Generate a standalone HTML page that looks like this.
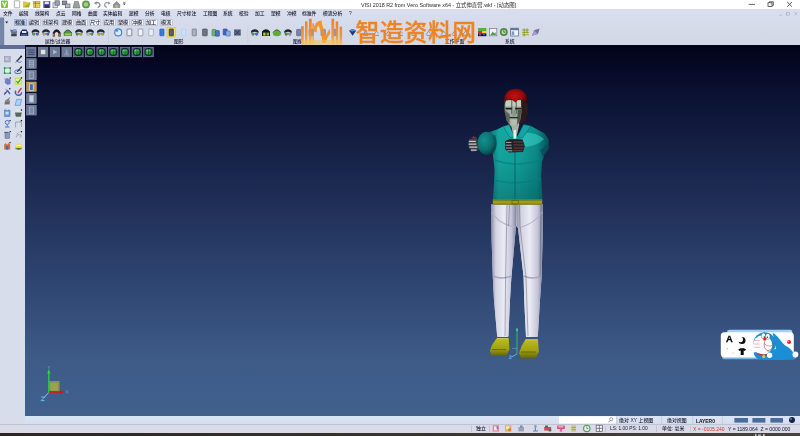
<!DOCTYPE html>
<html lang="zh-CN">
<head>
<meta charset="utf-8">
<title>VISI 2018 R2 from Vero Software x64</title>
<style>
html,body{margin:0;padding:0;}
body{width:800px;height:436px;overflow:hidden;position:relative;background:#d6dceb;
 font-family:"Liberation Sans","Noto Sans CJK SC",sans-serif;color:#1a1a2a;}
.abs{position:absolute;}
.t{position:absolute;white-space:nowrap;line-height:1;will-change:transform;font-size:4.8px;color:#15152a;font-weight:500;}
#titlebar{left:0;top:0;width:800px;height:9px;background:#ffffff;}
#ribbon{left:0;top:9px;width:800px;height:36px;background:linear-gradient(to bottom,#dadff0 0%,#d6dbeb 40%,#d3d8e6 100%);}
#view{left:25px;top:45px;width:775px;height:371px;
 background:linear-gradient(to bottom,#02021a 0%,#0a1030 12%,#1a274e 35%,#2d436f 62%,#3e5b88 85%,#41608c 100%);}
#lefthead{left:0;top:45px;width:25px;height:3.5px;background:#5d6d97;}
#left{left:0;top:48.5px;width:25px;height:375.8px;background:#d8ddec;}
#status1{left:25px;top:416px;width:775px;height:8.5px;background:linear-gradient(to bottom,#d9e5f6 0%,#d7e1f2 50%,#d5dcec 100%);}
#sline{left:0;top:424.3px;width:800px;height:0.8px;background:#bfc3d0;}
#status2{left:0;top:425px;width:800px;height:8px;background:#d9dce8;}
#taskbar{left:0;top:432.6px;width:800px;height:4px;background:linear-gradient(to right,#2e2420 0%,#3a332c 45%,#48433d 100%);}
.tab{position:absolute;top:18.6px;height:7.2px;background:#f5f6fb;border:0.5px solid #c3c9dc;box-sizing:border-box;border-radius:0.6px;}
.tab.sel{background:#bfcfea;border-color:#9ab2dc;}
.lbl{color:#22223a;font-size:4.8px;}
#wm{position:absolute;left:355.6px;top:18px;font-size:23.7px;font-weight:500;-webkit-text-stroke:0.35px #ef7f16;color:#ef7f16;opacity:.94;letter-spacing:.45px;line-height:30px;white-space:nowrap;font-family:"Liberation Sans","Noto Sans CJK SC",sans-serif;}
</style>
</head>
<body>
<div id="titlebar" class="abs"></div>
<div id="ribbon" class="abs"></div>
<div id="lefthead" class="abs"></div>
<div id="left" class="abs"></div>
<div id="view" class="abs"></div>
<div id="status1" class="abs"></div>
<div id="sline" class="abs"></div>
<div id="status2" class="abs"></div>
<div id="taskbar" class="abs"></div>

<div class="t" id="title" style="left:361.2px;top:2.9px;font-size:5.4px;color:#2a2a2a;font-weight:400;">VISI 2018 R2 from Vero Software x64 - 立式伸直臂.wkf - [动态图]</div>
<div class="t m" style="left:3px;top:11.5px;">文件</div>
<div class="t m" style="left:19px;top:11.5px;">编辑</div>
<div class="t m" style="left:35px;top:11.5px;">线架构</div>
<div class="t m" style="left:56px;top:11.5px;">点云</div>
<div class="t m" style="left:71.5px;top:11.5px;">网格</div>
<div class="t m" style="left:88px;top:11.5px;">曲面</div>
<div class="t m" style="left:103px;top:11.5px;">实体编辑</div>
<div class="t m" style="left:129px;top:11.5px;">建模</div>
<div class="t m" style="left:145px;top:11.5px;">分析</div>
<div class="t m" style="left:160.5px;top:11.5px;">电极</div>
<div class="t m" style="left:177px;top:11.5px;">尺寸标注</div>
<div class="t m" style="left:203px;top:11.5px;">工程图</div>
<div class="t m" style="left:223px;top:11.5px;">系统</div>
<div class="t m" style="left:238.5px;top:11.5px;">校验</div>
<div class="t m" style="left:254.5px;top:11.5px;">加工</div>
<div class="t m" style="left:270.5px;top:11.5px;">塑模</div>
<div class="t m" style="left:286.5px;top:11.5px;">冲模</div>
<div class="t m" style="left:302px;top:11.5px;">标准件</div>
<div class="t m" style="left:322.5px;top:11.5px;">模流分析</div>
<div class="t m" style="left:349px;top:11.5px;">?</div>
<div class="tab sel" style="left:13.7px;width:13.3px;"></div>
<div class="t" style="left:15.25px;top:19.6px;font-size:5.1px;color:#1c1c30;">标准</div>
<div class="tab" style="left:28.2px;width:12.4px;"></div>
<div class="t" style="left:29.30px;top:19.6px;font-size:5.1px;color:#1c1c30;">编辑</div>
<div class="tab" style="left:42px;width:17.4px;"></div>
<div class="t" style="left:43.05px;top:19.6px;font-size:5.1px;color:#1c1c30;">线架构</div>
<div class="tab" style="left:61px;width:12.7px;"></div>
<div class="t" style="left:62.25px;top:19.6px;font-size:5.1px;color:#1c1c30;">建模</div>
<div class="tab" style="left:75px;width:12.5px;"></div>
<div class="t" style="left:76.15px;top:19.6px;font-size:5.1px;color:#1c1c30;">曲面</div>
<div class="tab" style="left:88.8px;width:12.4px;"></div>
<div class="t" style="left:89.90px;top:19.6px;font-size:5.1px;color:#1c1c30;">尺寸</div>
<div class="tab" style="left:103px;width:12.5px;"></div>
<div class="t" style="left:104.15px;top:19.6px;font-size:5.1px;color:#1c1c30;">应用</div>
<div class="tab" style="left:117px;width:12.5px;"></div>
<div class="t" style="left:118.15px;top:19.6px;font-size:5.1px;color:#1c1c30;">塑模</div>
<div class="tab" style="left:131px;width:12.5px;"></div>
<div class="t" style="left:132.15px;top:19.6px;font-size:5.1px;color:#1c1c30;">冲模</div>
<div class="tab" style="left:145px;width:12.7px;"></div>
<div class="t" style="left:146.25px;top:19.6px;font-size:5.1px;color:#1c1c30;">加工</div>
<div class="tab" style="left:159.5px;width:13.0px;"></div>
<div class="t" style="left:160.90px;top:19.6px;font-size:5.1px;color:#1c1c30;">模流</div>
<div class="t lbl" style="left:44.5px;top:40.1px;">属性/过滤器</div>
<div class="t lbl" style="left:173.5px;top:40.1px;">图形</div>
<div class="t lbl" style="left:292.5px;top:40.1px;">图像</div>
<div class="t lbl" style="left:444.5px;top:40.1px;">工作平面</div>
<div class="t lbl" style="left:505px;top:40.1px;">系统</div>
<div class="t" style="left:618.6px;top:418.8px;font-size:4.9px;letter-spacing:.08px;">绝对 XY 上视图</div>
<div class="t" style="left:667px;top:418.8px;font-size:4.9px;">绝对视图</div>
<div class="t" style="left:695.5px;top:420px;font-size:4.9px;font-weight:700;color:#0c0c18;">LAYER0</div>
<div class="t" style="left:476px;top:426.9px;font-size:4.9px;">独立</div>
<div class="t" style="left:610px;top:427px;font-size:4.8px;">LS: 1.00 PS: 1.00</div>
<div class="t" style="left:662.4px;top:426.9px;font-size:4.9px;">单位: 毫米</div>
<div class="t" style="left:693px;top:427px;font-size:5px;color:#e03030;">X = -0105.240</div>
<div class="t" style="left:727.6px;top:427px;font-size:5.05px;">Y = 1189.064&nbsp; Z = 0000.000</div>
<svg class="abs" style="left:0;top:0" width="800" height="436" viewBox="0 0 800 436">
<defs>
<linearGradient id="legL" x1="0" x2="1" y1="0" y2="0"><stop offset="0" stop-color="#8f90aa"/><stop offset=".18" stop-color="#d2d3e2"/><stop offset=".5" stop-color="#ebebf5"/><stop offset=".8" stop-color="#c4c5d8"/><stop offset="1" stop-color="#7f819d"/></linearGradient>
<linearGradient id="teal" x1="0" x2="1" y1="0" y2="0"><stop offset="0" stop-color="#0a6a70"/><stop offset=".18" stop-color="#16a8a2"/><stop offset=".5" stop-color="#11a29c"/><stop offset=".8" stop-color="#0b8a88"/><stop offset="1" stop-color="#064e58"/></linearGradient>
<linearGradient id="tdark" x1="0" x2="0" y1="0" y2="1"><stop offset="0" stop-color="#003840" stop-opacity="0"/><stop offset=".45" stop-color="#003840" stop-opacity=".05"/><stop offset="1" stop-color="#003840" stop-opacity=".32"/></linearGradient>
<radialGradient id="armG" cx=".36" cy=".36" r=".7"><stop offset="0" stop-color="#129290"/><stop offset=".6" stop-color="#0b7070"/><stop offset="1" stop-color="#043c42"/></radialGradient>
<radialGradient id="hair" cx=".45" cy=".45" r=".62"><stop offset="0" stop-color="#c01414"/><stop offset=".55" stop-color="#980a0a"/><stop offset="1" stop-color="#3c0505"/></radialGradient>
<linearGradient id="shoe" x1="0" x2="0" y1="0" y2="1"><stop offset="0" stop-color="#bcbc1e"/><stop offset=".6" stop-color="#a0a012"/><stop offset="1" stop-color="#626208"/></linearGradient>
<radialGradient id="gs" cx=".4" cy=".35" r=".7"><stop offset="0" stop-color="#7cf07c"/><stop offset=".6" stop-color="#28b040"/><stop offset="1" stop-color="#0a6020"/></radialGradient>
</defs>
<rect x="0" y="17.5" width="4.2" height="27.5" fill="#7686ab"/>
<rect x="108" y="27.5" width="0.7" height="16.5" fill="#c5cadb"/>
<rect x="247.5" y="27.5" width="0.7" height="16.5" fill="#c5cadb"/>
<path d="M5.2,21.6 h3 l-1.5,2 z" fill="#222"/>
<g stroke="#222" stroke-width="0.7" fill="none">
<path d="M748.7,4.4 h6.3"/>
<rect x="768" y="2.8" width="4" height="3.6"/><path d="M769.3,2.8 v-1 h4 v3.6 h-1.2"/>
<path d="M787.2,2 l4.8,4.8 M792,2 l-4.8,4.8"/>
</g>
<g stroke="#a5a9b8" stroke-width="0.6" fill="none">
<path d="M779,15.2 h3"/><rect x="786.3" y="12.3" width="3" height="2.8"/><path d="M794.2,12 l3.2,3.2 M797.4,12 l-3.2,3.2"/>
</g>
<rect x="1" y="0.6" width="7" height="7.4" rx="1" fill="#7fc242"/><path d="M2.6,2 l1.9,4.4 l1.9,-4.4" stroke="#fff" stroke-width="1.2" fill="none"/>
<rect x="14.3" y="0.8" width="5.4" height="7" fill="#fdfdfd" stroke="#8a8fa0" stroke-width="0.7" rx="0.5"/>
<path d="M23,7.5 l1.5,-5 h6 l-1.5,5 z" fill="#8db52c"/><path d="M23,7.5 v-6 h3 l.8,1 h2.4 v1" fill="#e3c33a"/>
<rect x="33.5" y="1.2" width="6.5" height="6.4" fill="#e9cf55" stroke="#9a8a30" stroke-width=".5"/><path d="M35.5,1.2 v6.4 M33.5,3.3 h6.5" stroke="#7a6a20" stroke-width=".6"/>
<rect x="43.3" y="1" width="7" height="7" rx=".6" fill="#5a5aa0"/><rect x="44.8" y="1.6" width="4" height="2.4" fill="#e8e8f8"/><rect x="44.6" y="5.2" width="4.4" height="2.6" fill="#2c2c60"/>
<rect x="53" y="2.8" width="4.4" height="5" fill="#e8e8ee" stroke="#555b6a" stroke-width=".6"/><rect x="55" y="0.8" width="4.4" height="4.4" fill="#9aa0b0" stroke="#555b6a" stroke-width=".6"/>
<rect x="62.2" y="1" width="4.6" height="3.8" fill="#8a90a0" stroke="#444a58" stroke-width=".6"/><rect x="65.6" y="4" width="4.4" height="3.8" fill="#b9bfd0" stroke="#444a58" stroke-width=".6"/>
<path d="M73,8 l1.6,-6.6 h3.6 l1.8,6.6 z" fill="#9aa09a" stroke="#5a605a" stroke-width=".5"/>
<circle cx="86" cy="4.4" r="3.9" fill="#5c9a48"/><circle cx="86" cy="4.4" r="2.2" fill="#a7cf92"/>
<path d="M95,3.2 q3.8,-1.8 5,1.6 q.2,2 -2.4,2.6" stroke="#8a8e98" stroke-width="1.3" fill="none"/><path d="M94,3.4 l2.6,-2.2 v3.6 z" fill="#8a8e98"/>
<path d="M109.6,3.2 q-3.8,-1.8 -5,1.6 q-.2,2 2.4,2.6" stroke="#9a9ea8" stroke-width="1.3" fill="none"/><path d="M110.6,3.4 l-2.6,-2.2 v3.6 z" fill="#9a9ea8"/>
<path d="M113.4,7.6 v-3 l3.2,-3 l3.2,3 v3 z" fill="#8e94a6" stroke="#5c6274" stroke-width=".5"/><rect x="115.6" y="5" width="2" height="2.6" fill="#d9c25c"/>
<path d="M123,3.4 h2.6 l-1.3,1.8 z" fill="#333"/><path d="M123,2.4 h2.6" stroke="#333" stroke-width=".5"/>
<path d="M10,29.5 l2,5.8 h4.4 l.8,-4.5 z" fill="#6a7080"/><path d="M11.2,34 h5.4 v2.2 h-5.4z" fill="#3a4050"/><rect x="13" y="29" width="3.4" height="2.6" fill="#7aa2d8"/>
<path d="M20,36 v-3.4 l2.4,-3.2 h4 l1.8,3.2 v3.4 z" fill="#1c2c58"/><rect x="22" y="31" width="4.4" height="2" fill="#dfe6f4"/><rect x="21" y="34.6" width="6.4" height="1" fill="#6f87c0"/>
<path d="M31.5,32.4 q.4,-3 4,-3.2 q3.6,.2 4,3.2 l-.9,.3 q-3.1,-1.8 -6.2,0z" fill="#1e2430"/>
<path d="M32.5,33 h2.4 v1.8 q-1.2,1.2 -2.4,0z" fill="#58b848" stroke="#1e2430" stroke-width=".35"/><path d="M36.1,33 h2.4 v1.8 q-1.2,1.2 -2.4,0z" fill="#4878d8" stroke="#1e2430" stroke-width=".35"/>
<path d="M42,32.4 q.4,-3 4,-3.2 q3.6,.2 4,3.2 l-.9,.3 q-3.1,-1.8 -6.2,0z" fill="#1e2430"/>
<path d="M43,33 h2.4 v1.8 q-1.2,1.2 -2.4,0z" fill="#d8c838" stroke="#1e2430" stroke-width=".35"/><path d="M46.6,33 h2.4 v1.8 q-1.2,1.2 -2.4,0z" fill="#4878d8" stroke="#1e2430" stroke-width=".35"/>
<path d="M52.8,36.5 v-4 q3.9,-6.5 7.8,0 v4 h-2.2 v-3.6 q-1.7,-2 -3.4,0 v3.6z" fill="#1c1c1c"/><rect x="53" y="33.4" width="1.8" height="3" fill="#b56a2a"/><rect x="58.6" y="33.4" width="1.8" height="3" fill="#b56a2a"/>
<path d="M63.8,33.2 q4,-6.6 8.2,0 v2.8 h-8.2z" fill="#4a9a3a"/><path d="M65,33.4 h6 v2 h-6z" fill="#9ad04a"/><path d="M63.8,33.2 q4,-6.6 8.2,0" stroke="#26401e" stroke-width=".8" fill="none"/>
<path d="M75,32.4 q.4,-3 4,-3.2 q3.6,.2 4,3.2 l-.9,.3 q-3.1,-1.8 -6.2,0z" fill="#1e2430"/>
<path d="M76,33 h2.4 v1.8 q-1.2,1.2 -2.4,0z" fill="#5aa83a" stroke="#1e2430" stroke-width=".35"/><path d="M79.6,33 h2.4 v1.8 q-1.2,1.2 -2.4,0z" fill="#c8c83a" stroke="#1e2430" stroke-width=".35"/>
<path d="M86,32.4 q.4,-3 4,-3.2 q3.6,.2 4,3.2 l-.9,.3 q-3.1,-1.8 -6.2,0z" fill="#1e2430"/>
<path d="M87,33 h2.4 v1.8 q-1.2,1.2 -2.4,0z" fill="#dfe4ef" stroke="#1e2430" stroke-width=".35"/><path d="M90.6,33 h2.4 v1.8 q-1.2,1.2 -2.4,0z" fill="#58b848" stroke="#1e2430" stroke-width=".35"/>
<path d="M96.8,32.4 q.4,-3 4,-3.2 q3.6,.2 4,3.2 l-.9,.3 q-3.1,-1.8 -6.2,0z" fill="#1e2430"/>
<path d="M97.8,33 h2.4 v1.8 q-1.2,1.2 -2.4,0z" fill="#d8c838" stroke="#1e2430" stroke-width=".35"/><path d="M101.39999999999999,33 h2.4 v1.8 q-1.2,1.2 -2.4,0z" fill="#d8c838" stroke="#1e2430" stroke-width=".35"/>
<circle cx="118.2" cy="32.4" r="3.5" fill="#dbe9fa" stroke="#3f7fd0" stroke-width="1.1"/><path d="M116,30 l2.4,.4 l-1.6,1.8z" fill="#2a5fb0"/>
<rect x="127" y="29" width="4.8" height="6.8" fill="#eef0f6" stroke="#6a6f82" stroke-width="0.8" rx="0.5"/>
<rect x="138.2" y="29" width="4.6" height="6.8" fill="#f3f4f9" stroke="#7c8194" stroke-width="0.7" rx="0.5"/>
<rect x="148.8" y="29" width="4.6" height="6.8" fill="#eceef5" stroke="#9a9fb0" stroke-width="0.7" rx="0.5"/>
<rect x="159.8" y="29" width="4.2" height="6.8" fill="#3b78d8" stroke="#2a58a8" stroke-width="0.6" rx="0.5"/>
<rect x="167" y="27.6" width="8.6" height="9.4" fill="#f6df5a" stroke="#d8b830" stroke-width=".5"/>
<rect x="169.2" y="29" width="4.2" height="6.8" fill="#5a5e6a" stroke="#2c303a" stroke-width="0.7" rx="0.5"/>
<rect x="181.6" y="29" width="4.2" height="6.8" fill="#c6e2f8" stroke="#a8cdf0" stroke-width="0.6" rx="0.5"/>
<rect x="192.2" y="29" width="4.2" height="6.8" fill="#aab0c0" stroke="#70768a" stroke-width="0.7" rx="0.5"/>
<rect x="202.6" y="29" width="4.6" height="6.8" fill="#70747e" stroke="#4a4e5a" stroke-width="0.7" rx="0.5"/>
<rect x="212" y="29.4" width="4" height="6.4" fill="#6ab868" stroke="#3c8040" stroke-width="0.6" rx="0.5"/>
<rect x="215.4" y="30.6" width="4" height="5.6" fill="#4a74c8" stroke="#2c4c90" stroke-width="0.6" rx="0.5"/>
<rect x="223.2" y="29" width="4" height="6" fill="#3c66b4" stroke="#28468a" stroke-width="0.6" rx="0.5"/>
<rect x="226" y="31" width="4.2" height="5" fill="#8ab0e6" stroke="#3c66b4" stroke-width="0.6" rx="0.5"/>
<rect x="234" y="29.4" width="6.8" height="6.2" fill="#5a6684"/><path d="M235,30.4 l4.8,4.4 M239.8,30.4 l-4.8,4.4" stroke="#2e3854" stroke-width=".9"/>
<path d="M250.8,32.4 q.4,-3 4,-3.2 q3.6,.2 4,3.2 l-.9,.3 q-3.1,-1.8 -6.2,0z" fill="#1e2430"/>
<path d="M251.8,33 h2.4 v1.8 q-1.2,1.2 -2.4,0z" fill="#58b848" stroke="#1e2430" stroke-width=".35"/><path d="M255.4,33 h2.4 v1.8 q-1.2,1.2 -2.4,0z" fill="#4878d8" stroke="#1e2430" stroke-width=".35"/>
<path d="M262,36 v-4.4 q4,-4.6 8,0 v4.4z" fill="#15181c"/><rect x="263.2" y="32.6" width="2.4" height="3" fill="#c0c838"/><rect x="266.6" y="32.6" width="2.4" height="3" fill="#88b838"/>
<path d="M273,32.6 q3.9,-5.6 7.8,0 v2.4 q-3.9,2.6 -7.8,0z" fill="#5cac40"/><path d="M273,32.6 q3.9,-5.6 7.8,0" stroke="#2c4a22" stroke-width=".8" fill="none"/>
<path d="M284,32.4 q.4,-3 4,-3.2 q3.6,.2 4,3.2 l-.9,.3 q-3.1,-1.8 -6.2,0z" fill="#1e2430"/>
<path d="M285,33 h2.4 v1.8 q-1.2,1.2 -2.4,0z" fill="#58a838" stroke="#1e2430" stroke-width=".35"/><path d="M288.6,33 h2.4 v1.8 q-1.2,1.2 -2.4,0z" fill="#a8b8a8" stroke="#1e2430" stroke-width=".35"/>
<rect x="296.6" y="29.4" width="4.2" height="6.4" fill="#7a86a8" stroke="#4a5678" stroke-width="0.6" rx="0.5"/>
<rect x="309" y="29.4" width="4.4" height="6.2" fill="#8a96b8" stroke="#5a6688" stroke-width="0.5" rx="0.5"/>
<rect x="321" y="29.4" width="4.4" height="6.2" fill="#7aa0d0" stroke="#5a6688" stroke-width="0.5" rx="0.5"/>
<rect x="333" y="29.4" width="4.4" height="6.2" fill="#8a96b8" stroke="#5a6688" stroke-width="0.5" rx="0.5"/>
<path d="M349,30.4 l3.6,-1.4 l3.6,1.4 l-3.6,5.4z" fill="#1c3c78"/><path d="M349,30.4 l3.6,1.2 l3.6,-1.2 l-3.6,-1.4z" fill="#5a8ad0"/>
<path d="M363,34.6 l2.4,-3.4 l2.2,2 M363.6,35.4 h4.4" stroke="#2c3c6c" stroke-width=".8" fill="none" opacity=".55"/>
<path d="M374,34.6 l2.4,-3.4 l2.2,2 M374.6,35.4 h4.4" stroke="#2c3c6c" stroke-width=".8" fill="none" opacity=".55"/>
<path d="M386,34.6 l2.4,-3.4 l2.2,2 M386.6,35.4 h4.4" stroke="#2c3c6c" stroke-width=".8" fill="none" opacity=".55"/>
<path d="M398,34.6 l2.4,-3.4 l2.2,2 M398.6,35.4 h4.4" stroke="#2c3c6c" stroke-width=".8" fill="none" opacity=".55"/>
<path d="M411,34.6 l2.4,-3.4 l2.2,2 M411.6,35.4 h4.4" stroke="#2c3c6c" stroke-width=".8" fill="none" opacity=".55"/>
<path d="M426,34.6 l2.4,-3.4 l2.2,2 M426.6,35.4 h4.4" stroke="#2c3c6c" stroke-width=".8" fill="none" opacity=".55"/>
<path d="M441,34.6 l2.4,-3.4 l2.2,2 M441.6,35.4 h4.4" stroke="#2c3c6c" stroke-width=".8" fill="none" opacity=".55"/>
<path d="M452,34.6 l2.4,-3.4 l2.2,2 M452.6,35.4 h4.4" stroke="#2c3c6c" stroke-width=".8" fill="none" opacity=".55"/>
<path d="M463,34.6 l2.4,-3.4 l2.2,2 M463.6,35.4 h4.4" stroke="#2c3c6c" stroke-width=".8" fill="none" opacity=".55"/>
<rect x="478" y="28" width="8.4" height="3" fill="#58b040"/><rect x="478" y="31" width="4.2" height="2.4" fill="#d83030"/><rect x="482.2" y="31" width="4.2" height="2.4" fill="#e8d030"/><rect x="478" y="33.4" width="8.4" height="2.8" fill="#181818"/><rect x="479" y="34.2" width="2" height="1.2" fill="#d040c0"/><rect x="483" y="34.2" width="2" height="1.2" fill="#4060e0"/>
<rect x="489.6" y="28.4" width="7.2" height="7.4" fill="#f0f2f6" stroke="#70768a" stroke-width=".7"/><path d="M490.4,35 l2.4,-3.4 l1.6,1.8 l1.4,-1.2 v2.8z" fill="#48a048"/>
<circle cx="503.8" cy="32" r="3.9" fill="#4f8a3c"/><circle cx="503.8" cy="32" r="2.3" fill="#b9d8a8"/><path d="M503.8,30.2 v2 h1.6" stroke="#2c5a20" stroke-width=".7" fill="none"/>
<rect x="510.6" y="28.2" width="8" height="7.8" fill="#f2f4f8" stroke="#5c7498" stroke-width=".8"/><rect x="510.6" y="28.2" width="8" height="2" fill="#5c7498"/><rect x="511.6" y="31.4" width="2.6" height="3.6" fill="#7c9cc8"/>
<path d="M522,30 h7 M522,32.4 h7 M522,34.8 h7" stroke="#a8a81c" stroke-width="1"/><path d="M524.2,28.4 v8 M527,28.4 v5" stroke="#70781a" stroke-width=".7"/>
<path d="M532,35.8 l2,-5.6 l5.6,-1.8 l-1.6,5.6z" fill="#7c6ca4"/><path d="M532,35.8 l2,-5.6 l3.8,3.8z" fill="#a8a0c0"/>
<rect x="26.4" y="47.2" width="9.6" height="9.6" fill="#6c7994" stroke="#8a95b0" stroke-width=".6"/>
<path d="M27.7,50 h7 M27.7,52.2 h7 M27.7,54.4 h7" stroke="#3c4a78" stroke-width="1"/>
<rect x="38.3" y="47.2" width="9.6" height="9.6" fill="#6c7994" stroke="#8a95b0" stroke-width=".6"/>
<rect x="40.9" y="49.8" width="4.4" height="4.4" fill="#dfe6da"/>
<rect x="50.1" y="47.2" width="9.6" height="9.6" fill="#6c7994" stroke="#8a95b0" stroke-width=".6"/>
<path d="M53.1,49.6 l4.2,2.4 l-4.2,2.4z" fill="#aab6cc"/>
<rect x="61.9" y="47.2" width="9.6" height="9.6" fill="#6c7994" stroke="#8a95b0" stroke-width=".6"/>
<path d="M66.7,49 l3.2,6.4 h-6.4z" fill="#7e90b4"/><path d="M64.9,49.4 l3,4" stroke="#5a8ad8" stroke-width=".8"/><path d="M66.7,49 v6.4" stroke="#c8a890" stroke-width=".5"/>
<rect x="73.6" y="47.2" width="9.6" height="9.6" fill="#4c5872" stroke="#8a95b0" stroke-width=".6"/>
<circle cx="78.39999999999999" cy="52" r="4" fill="#141c3c"/><circle cx="78.39999999999999" cy="52" r="3.1" fill="url(#gs)"/><path d="M75.19999999999999,52 h6.4 M78.39999999999999,48.8 v6.4" stroke="#0c3818" stroke-width=".6"/>
<rect x="85.2" y="47.2" width="9.6" height="9.6" fill="#4c5872" stroke="#8a95b0" stroke-width=".6"/>
<circle cx="90.0" cy="52" r="4" fill="#141c3c"/><circle cx="90.0" cy="52" r="3.1" fill="url(#gs)"/><path d="M86.8,52 h6.4 M90.0,48.8 v6.4" stroke="#0c3818" stroke-width=".6"/>
<rect x="96.9" y="47.2" width="9.6" height="9.6" fill="#4c5872" stroke="#8a95b0" stroke-width=".6"/>
<circle cx="101.7" cy="52" r="4" fill="#141c3c"/><circle cx="101.7" cy="52" r="3.1" fill="url(#gs)"/><path d="M98.5,52 h6.4 M101.7,48.8 v6.4" stroke="#0c3818" stroke-width=".6"/>
<rect x="108.5" y="47.2" width="9.6" height="9.6" fill="#4c5872" stroke="#8a95b0" stroke-width=".6"/>
<circle cx="113.3" cy="52" r="4" fill="#141c3c"/><circle cx="113.3" cy="52" r="3.1" fill="url(#gs)"/><path d="M110.1,52 h6.4 M113.3,48.8 v6.4" stroke="#0c3818" stroke-width=".6"/>
<rect x="120.2" y="47.2" width="9.6" height="9.6" fill="#4c5872" stroke="#8a95b0" stroke-width=".6"/>
<circle cx="125.0" cy="52" r="4" fill="#141c3c"/><circle cx="125.0" cy="52" r="3.1" fill="url(#gs)"/><path d="M121.8,52 h6.4 M125.0,48.8 v6.4" stroke="#0c3818" stroke-width=".6"/>
<rect x="132" y="47.2" width="9.6" height="9.6" fill="#4c5872" stroke="#8a95b0" stroke-width=".6"/>
<circle cx="136.8" cy="52" r="4" fill="#141c3c"/><circle cx="136.8" cy="52" r="3.1" fill="url(#gs)"/><path d="M133.6,52 h6.4 M136.8,48.8 v6.4" stroke="#0c3818" stroke-width=".6"/>
<rect x="143.7" y="47.2" width="9.6" height="9.6" fill="#4c5872" stroke="#8a95b0" stroke-width=".6"/>
<circle cx="148.5" cy="52" r="4" fill="#141c3c"/><circle cx="148.5" cy="52" r="3.1" fill="url(#gs)"/><path d="M145.29999999999998,52 h6.4 M148.5,48.8 v6.4" stroke="#0c3818" stroke-width=".6"/>
<rect x="26.6" y="58.7" width="9.6" height="9.6" fill="#6a7893" stroke="#8a95b0" stroke-width=".6"/>
<rect x="29.4" y="60.300000000000004" width="4" height="6.8" fill="#7a88a6" stroke="#aab4cc" stroke-width=".7"/>
<path d="M29.4,62.7 h4 M29.4,64.7 h4" stroke="#aab4cc" stroke-width=".6"/>
<rect x="26.6" y="70.3" width="9.6" height="9.6" fill="#6a7893" stroke="#8a95b0" stroke-width=".6"/>
<rect x="29.4" y="71.89999999999999" width="4" height="6.8" fill="#7a88a6" stroke="#aab4cc" stroke-width=".7"/>
<rect x="26.6" y="82" width="9.6" height="9.4" fill="#b8964e" stroke="#cdb070" stroke-width=".6"/>
<rect x="29.6" y="83.8" width="3.6" height="6.6" fill="#4a66b8" stroke="#dfe6f8" stroke-width=".7"/>
<rect x="26.6" y="93.7" width="9.6" height="9.6" fill="#6a7893" stroke="#8a95b0" stroke-width=".6"/>
<rect x="29.4" y="95.3" width="4" height="6.8" fill="#c8d0e0" stroke="#aab4cc" stroke-width=".7"/>
<rect x="26.6" y="105.4" width="9.6" height="9.6" fill="#6a7893" stroke="#8a95b0" stroke-width=".6"/>
<rect x="29.4" y="107.0" width="4" height="6.8" fill="#7a88a6" stroke="#aab4cc" stroke-width=".7"/>
<rect x="4.4" y="56.6" width="5.8" height="5.4" fill="#aab2c8" stroke="#8a92aa" stroke-width=".5"/><rect x="5.4" y="57.6" width="3" height="2.6" fill="#c4cadc"/>
<path d="M21.4,56.2 l-4.6,5" stroke="#2e323c" stroke-width="1.3"/><path d="M15.4,62.4 q2,-2.2 3.2,-.4 q1.4,1.2 3,-.6" stroke="#4a5a9a" stroke-width=".8" fill="none"/><circle cx="21.2" cy="56.4" r=".9" fill="#15171c"/>
<rect x="4.6" y="68" width="5.6" height="5.2" fill="#e4ecf4" stroke="#3f9a5a" stroke-width=".9"/><rect x="3.8" y="67.2" width="1.6" height="1.6" fill="#2f8a4a"/><rect x="9.4" y="67.2" width="1.6" height="1.6" fill="#2f8a4a"/><rect x="3.8" y="72.4" width="1.6" height="1.6" fill="#2f8a4a"/><rect x="9.4" y="72.4" width="1.6" height="1.6" fill="#2f8a4a"/>
<ellipse cx="18" cy="71.8" rx="3.4" ry="1.9" fill="none" stroke="#4a5aa8" stroke-width=".9"/><path d="M21.6,67 l-4.4,4.8" stroke="#2e323c" stroke-width="1.2"/><rect x="20.6" y="66.6" width="1.4" height="1.4" fill="#15171c"/>
<path d="M5,79 l2,-1 l3.6,1.6 v4.4 l-3,1 l-2.6,-2z" fill="#6a80cc"/><path d="M4,78.4 l2.4,2 M4.4,82 l2,-1" stroke="#8a92a8" stroke-width=".8"/><rect x="9.6" y="77.4" width="1.3" height="1.3" fill="#15171c"/>
<rect x="15.2" y="78.2" width="6" height="6" fill="#e8f0a0" stroke="#c8d838" stroke-width=".9"/><path d="M16.4,81 l1.6,2 l2.6,-3.8" stroke="#2f9a3a" stroke-width="1.2" fill="none"/><rect x="20.8" y="77.2" width="1.3" height="1.3" fill="#15171c"/>
<path d="M4.2,94.6 l3.4,-4 l2.4,3.6" stroke="#3a5ab4" stroke-width="1.3" fill="none"/><path d="M5.4,89 l2.2,2.2" stroke="#6a7ac0" stroke-width=".9"/><circle cx="9.8" cy="88.8" r=".8" fill="#1c1c20"/><circle cx="5" cy="93" r=".7" fill="#c03030"/>
<path d="M15.6,90.6 q-1,4 2.4,4.6 q3.4,.4 3.6,-3" stroke="#3a5ab4" stroke-width="1.4" fill="none"/><path d="M21.4,88 l-3.6,5" stroke="#c83838" stroke-width="1.3"/>
<path d="M4.2,104.6 l1,-4 l3,-2 l2,2.4 l-.6,3.6z" fill="#8a8488"/><path d="M5.4,103 h4" stroke="#5a5458" stroke-width=".9"/><path d="M8.4,98.8 l1.6,-1" stroke="#4a4a55" stroke-width=".8"/>
<path d="M15,105.4 l1.6,-6 h5 l-1.4,6z" fill="#a9d2f4" stroke="#4f86c8" stroke-width=".6"/>
<rect x="4.6" y="110.6" width="5.4" height="5.8" fill="#6a9ade" stroke="#3a68b8" stroke-width=".5"/><rect x="5.6" y="111.8" width="3" height="2.6" fill="#d0e4f8"/><path d="M4.4,110 l2,-1 M8,109.6 l2,1" stroke="#5a88d0" stroke-width=".7"/>
<path d="M15,112.4 h6.8 l-.8,4.4 h-5.2z" fill="#55685a"/><path d="M15.6,111.6 q2.8,-2.4 5.6,0" stroke="#e8ece8" stroke-width="1.1" fill="none"/><rect x="20.8" y="109.4" width="1.3" height="1.3" fill="#15171c"/>
<circle cx="7.2" cy="122.4" r="2" fill="none" stroke="#4a74c4" stroke-width="1"/><path d="M7.2,124.4 v2.2 M5,127 h4.6" stroke="#4a74c4" stroke-width="1"/><rect x="9.4" y="120" width="1.2" height="1.2" fill="#15171c"/>
<path d="M15.6,127.4 v-5.4 h5.8 v5" stroke="#8a9a8a" stroke-width=".8" fill="none"/><rect x="20.8" y="120" width="1.3" height="1.3" fill="#15171c"/>
<rect x="5" y="132.6" width="4.6" height="5.8" fill="#8a98b4" stroke="#5a6884" stroke-width=".5"/><path d="M4.2,132.4 h4" stroke="#4a5878" stroke-width=".9"/><rect x="9.6" y="131" width="1.2" height="1.2" fill="#15171c"/>
<path d="M16,137.4 q1.6,-4 4.6,-2.4 q1.4,1 -.4,2.6" stroke="#b8a8ac" stroke-width="1.1" fill="none"/><path d="M16.6,134 l2,-1.4" stroke="#9a9aa8" stroke-width=".8"/><rect x="20.8" y="131" width="1.3" height="1.3" fill="#15171c"/>
<path d="M4.2,149.6 v-5 l1.6,-1.6 l1.4,1.8 l1.6,-2 l1.4,2 v4.8z" fill="#d0742a"/><rect x="6" y="146" width="2.4" height="3.6" fill="#4a68b8"/><rect x="9.4" y="142" width="1.2" height="1.2" fill="#15171c"/>
<path d="M15,148.6 q0,-4.6 3.6,-5 q3.6,.2 3.6,4.4 q-3.6,2.6 -7.2,.6z" fill="#e6d244"/><path d="M16.4,146.4 q2,-2.4 4.4,-.4" stroke="#f8f8f0" stroke-width="1.2" fill="none"/><path d="M15.4,148.6 q3.4,1.6 6.4,0" stroke="#4a9a3a" stroke-width="1"/>
<rect x="559" y="416.3" width="57" height="7.2" fill="#ffffff"/>
<circle cx="611.2" cy="419.2" r="1.6" fill="none" stroke="#5a6278" stroke-width=".6"/><path d="M610,420.6 l-1.6,1.8" stroke="#5a6278" stroke-width=".7"/>
<rect x="734.4" y="418" width="13.6" height="4.6" fill="#4b6b9c"/>
<rect x="752.4" y="418" width="13" height="4.6" fill="#4b6b9c"/>
<rect x="770.4" y="418" width="12.6" height="4.6" fill="#4b6b9c"/>
<circle cx="792" cy="420" r="3" fill="#15244a"/><circle cx="791" cy="419" r="1" fill="#5a7ab0"/>
<rect x="471" y="425.4" width=".6" height="7" fill="#b4b9c8"/>
<rect x="489" y="425.4" width=".6" height="7" fill="#b4b9c8"/>
<rect x="605" y="425.4" width=".6" height="7" fill="#b4b9c8"/>
<rect x="656" y="425.4" width=".6" height="7" fill="#b4b9c8"/>
<rect x="690" y="425.4" width=".6" height="7" fill="#b4b9c8"/>
<rect x="616.5" y="416.6" width=".6" height="7.4" fill="#b9bece"/>
<rect x="661" y="416.6" width=".6" height="7.4" fill="#b9bece"/>
<rect x="692.5" y="416.6" width=".6" height="7.4" fill="#b9bece"/>
<rect x="722" y="416.6" width=".6" height="7.4" fill="#b9bece"/>
<g opacity=".8">
<rect x="492.6" y="425.2" width="6.4" height="6.4" fill="#e47888"/><rect x="494" y="426.4" width="3" height="4" fill="#f4e8e8"/><rect x="496.6" y="426" width="1.6" height="3" fill="#4a6ac8"/>
<rect x="505" y="425.2" width="6.4" height="6.4" fill="#e8a838"/><rect x="506.2" y="426.2" width="3" height="3" fill="#f8f0d0"/><rect x="508.4" y="428.4" width="2.6" height="2.8" fill="#c86a28"/>
<rect x="518.4" y="427" width="5.6" height="4.4" fill="#8a94ac"/><rect x="520" y="425.4" width="2.6" height="2" fill="#5a78c0"/>
<path d="M535.4,425.2 v5.2 M533,431 h5" stroke="#4a68b0" stroke-width="1.1"/><circle cx="535.4" cy="426.4" r="1.3" fill="#7a8cb4"/>
<rect x="544.2" y="427" width="7" height="3.6" fill="#b83030"/><rect x="545" y="425.6" width="3" height="2" fill="#3a3a44"/><rect x="548.6" y="429.4" width="2.6" height="2" fill="#3a3a44"/>
<rect x="557.2" y="425.6" width="7.6" height="3.4" fill="#c82848"/><rect x="559.8" y="428.6" width="2.4" height="3" fill="#d848a8"/><rect x="558.4" y="426.4" width="5" height="1" fill="#f8e8f0"/>
<rect x="571.4" y="425.2" width="4.4" height="6.6" fill="#c8c470"/><path d="M571.4,427.4 h4.4 M571.4,429.6 h4.4" stroke="#6a6a70" stroke-width=".6"/>
<circle cx="586.8" cy="428.4" r="3.2" fill="#e8f4e8" stroke="#2c8a3c" stroke-width="1.1"/><path d="M586.8,426.4 v2.2 h1.6" stroke="#1c5a28" stroke-width=".7" fill="none"/>
<rect x="596.2" y="425.2" width="6.4" height="6.4" fill="#f4f4f8" stroke="#3a3a44" stroke-width=".7"/><path d="M599.4,425.2 v6.4 M596.2,428.4 h6.4" stroke="#3a3a44" stroke-width=".7"/>
</g>
<rect x="755" y="434" width="1.4" height="2" fill="#c8c8c8"/><rect x="758" y="434.4" width="3" height="1.6" fill="#b8b8b8"/><rect x="763" y="434.2" width="1.6" height="1.8" fill="#d0d0d0"/>
<rect x="49" y="381" width="10.6" height="11.2" fill="#8c9c50" opacity=".85"/><rect x="50.4" y="383" width="7.6" height="7.6" fill="#a0a848" opacity=".8"/>
<path d="M48.8,392.4 v-20" stroke="#30c848" stroke-width="1.4"/><path d="M47.2,373.6 l1.6,-4.6 l1.6,4.6z" fill="#30d850"/>
<path d="M49,392 h12" stroke="#c82020" stroke-width="1.8"/><path d="M60,390 l4.4,2 l-4.4,2z" fill="#d01818"/>
<path d="M48.6,392.6 l-5,5.6" stroke="#8cc8f0" stroke-width="1"/><path d="M41,397 h3.6 l-3.6,3.6 h3.6" stroke="#58c8f8" stroke-width=".9" fill="none"/>
<path d="M48,366 l1,1.6 l1,-1.6 M49,367.6 v1.6" stroke="#58a0d8" stroke-width=".6" fill="none"/>
<path d="M66,390.4 l2.4,3 M68.4,390.4 l-2.4,3" stroke="#7898c8" stroke-width=".6"/>
<g id="figure">
<path d="M491.3,204.4 L543,204.4 L542.6,240 L541.6,277 L540,300 L537.8,336 L526,336 L524.2,300 L523.6,277 L518,228 L516,226 L511.4,277 L510,300 L508.4,336 L497.2,336 L494,300 L492.8,277 L491.6,240 Z" fill="#d6d7e6"/>
<path d="M491.3,204.4 L516.5,204.4 L516,226 L511.4,277 L510,300 L508.4,337 L497.2,337 L494,300 L492.8,277 L491.6,240 Z" fill="url(#legL)"/>
<path d="M516.5,204.4 L543,204.4 L542.6,240 L541.6,277 L540,300 L537.8,337 L526,337 L524.2,300 L523.6,277 L518,228 L516.5,226 Z" fill="url(#legL)"/>
<path d="M492,212 q6,12 23,15 M542.4,212 q-8,12 -24,16" stroke="#b4b5ca" stroke-width="1.2" fill="none"/>
<path d="M493,276 q9,4 18.4,0 M523.6,276 q9,4 18,0" stroke="#a6a7c0" stroke-width="1.4" fill="none"/>
<path d="M507,205 L505.6,277 L505,336 M509.5,205 L508.6,226 M519.5,205 L520,226 L526,277 L528,336 M541,205 L540,277" stroke="#3c3c4a" stroke-width=".45" fill="none" opacity=".8"/>
<path d="M496.5,338.6 L508.8,338.6 L509.4,350 L506,356 L491.5,356 L489.8,351 L492,345 Z" fill="url(#shoe)"/>
<path d="M525.4,339.6 L538,339.6 L538.8,352 L535.6,358.4 L521,358.4 L519,353 L521.6,346 Z" fill="url(#shoe)"/>
<path d="M492,349.6 h14 M521,352 h14.6" stroke="#5c5c06" stroke-width=".8"/>
<path d="M497,338.6 h11.6 M525.6,339.8 h12.2" stroke="#e0e060" stroke-width=".8"/>
<path d="M517,328 v26" stroke="#28c070" stroke-width="1"/><path d="M516,331 l1,-3.4 l1,3.4z" fill="#40e090"/><path d="M517,354 l-5.4,3" stroke="#58c8f8" stroke-width=".8"/><path d="M509,356 h2.6 l-2.6,2.6 h2.6" stroke="#58c8f8" stroke-width=".7" fill="none"/><path d="M512,348.4 h5" stroke="#7898c8" stroke-width=".6"/>
<path d="M504,126 L497,129.4 L488,132.6 L492.6,152 L494.6,170 L494,184 L493,200 L542.4,200 L541.2,176 L542,162 L544.6,154 L548.8,148 L549,140 L544.6,133.4 L531,126 L518,136 L513,136 Z" fill="url(#teal)"/><path d="M504,126 L497,129.4 L488,132.6 L492.6,152 L494.6,170 L494,184 L493,200 L542.4,200 L541.2,176 L542,162 L544.6,154 L548.8,148 L549,140 L544.6,133.4 L531,126 L518,136 L513,136 Z" fill="url(#tdark)"/>
<path d="M520,133 q14,-2 24,6 q-8,8 -22,8z" fill="#3cd6cc" opacity=".55"/>
<path d="M495,160 q20,8 46,0 M494,180 q22,6 47,-1" stroke="#0a7a82" stroke-width="1.6" fill="none" opacity=".7"/>
<path d="M540,150 q6,-3 9,-9 l0,8 l-6,8z" fill="#064a56" opacity=".7"/>
<ellipse cx="486.8" cy="143.4" rx="9.6" ry="11.6" fill="url(#armG)"/>
<path d="M494.6,135 q3.6,9 -1.2,19" stroke="#065058" stroke-width="1.3" fill="none" opacity=".75"/>
<path d="M503.4,126.6 L509,124.6 L514.4,136.4 L510,137.6 Z" fill="#18b0ae" stroke="#086068" stroke-width=".5"/>
<path d="M531,126 L523.6,124.6 L517.4,136.4 L522.4,138 Z" fill="#14a4a4" stroke="#086068" stroke-width=".5"/>
<path d="M510.6,123 L519.6,123 L516.2,138.6 L514,138.6 Z" fill="#a7b2aa"/>
<rect x="513.6" y="130" width="2.4" height="8.6" fill="#e2f0e8"/>
<path d="M515,139 V200" stroke="#07585e" stroke-width=".8"/>
<rect x="492.8" y="199.4" width="49.4" height="5" fill="#a09c14"/><rect x="492.8" y="199.4" width="49.4" height="1.2" fill="#4c7a30"/><rect x="492.8" y="203.6" width="49.4" height="1" fill="#7a7810"/><rect x="512" y="200.4" width="6.4" height="3.6" fill="none" stroke="#5c5c0c" stroke-width=".6"/>
<path d="M469,139 L476.8,137.6 L478.6,150.4 L471.4,152 L468.4,147 Z" fill="#3c3e46"/>
<path d="M468.8,141.4 h7 M468.6,144.2 h7.8 M469.4,147.2 h8 M471,150.2 h5.6" stroke="#c9c9c9" stroke-width="1.2"/>
<path d="M471.4,138 l2.2,-2 l2.6,1.4 l-.4,1.4z" fill="#703434"/>
<path d="M505,141 L510,139 L522.6,139.4 L524.8,146 L523,152 L509,152.6 L505,149 Z" fill="#1e2026"/>
<path d="M506,142.4 h5.4 M505.6,145.2 h6 M506,148 h6 M507.4,150.8 h5" stroke="#a9adad" stroke-width="1"/>
<path d="M513.4,142 h9.6 M513.4,145 h10.4 M513.4,148 h10 M513.4,150.8 h9" stroke="#7a3c3c" stroke-width="1.1"/>
<path d="M520.6,99 L527.6,100.6 L528,113 L525.4,120.6 L521,124.6 L519,124 Z" fill="#2a1a18"/>
<path d="M504.6,100 L521,100 L521.4,112 L520.2,120 L517.2,126.6 L510.8,126.6 L506.8,120.4 L504.8,111 Z" fill="#a3afa0"/>
<path d="M505,100.6 h16 v5.8 h-16z" fill="#c3cdbf"/>
<path d="M505,110 l1.8,10 l2.6,3.4 l.4,-9 z" fill="#5c665c"/>
<path d="M517.6,110 l3.6,0 l-1,10 l-3,5z" fill="#4a524c"/>
<path d="M505.6,108.6 h6.4 M515.2,108.6 h6" stroke="#1c2020" stroke-width="1.8"/>
<path d="M511.8,100 v14 M516.2,100 v14" stroke="#2a302c" stroke-width=".7"/>
<path d="M512.4,110 h3.4 v6 h-3.4z" fill="#8a968a"/>
<path d="M509.4,117.6 h8.6" stroke="#2c2826" stroke-width="1.4"/>
<path d="M510.8,120 h6 l-.6,5.6 h-4.6z" fill="#b4beb0"/>
<path d="M504.8,100 L504.8,111 L506.8,120.4 L510.8,126.6" stroke="#4a564c" stroke-width=".7" fill="none"/>
<path d="M504.4,104.4 C503.4,94 508,88.8 515.8,88.8 C523.8,88.8 528,94 527.2,105 L524.4,100.4 L518.6,99.6 L515.4,102.4 L511.6,99.6 L506,100.4 Z" fill="url(#hair)"/>
</g>
<g id="ime">
<rect x="727" y="329.8" width="65.4" height="5" rx="2.4" fill="#a4d0f4"/>
<rect x="722" y="354.6" width="74" height="4.6" rx="2.2" fill="#8cc0ee" opacity=".85"/>
<rect x="720.8" y="332.2" width="73" height="25.2" rx="3.6" fill="#ffffff"/>
<path d="M772.6,332.8 C779,336.4 781.6,343.4 786.4,346.2 C791.4,349 794.6,353 795.4,358.4 C784,360.6 768,360.4 758,359 C755.4,357.6 754,355.4 753.6,352.6 L776,349 Z" fill="#1b8ed6"/>
<ellipse cx="795.4" cy="354.6" rx="2.9" ry="3" fill="#ffffff"/>
<circle cx="789" cy="342" r="2" fill="#dc2626"/><circle cx="788.4" cy="341.4" r=".7" fill="#f8a0a0"/>
<circle cx="764.6" cy="343.4" r="11.2" fill="#1b8ed6"/>
<circle cx="762.6" cy="345" r="9.7" fill="#ffffff"/>
<ellipse cx="763.4" cy="335.8" rx="2.2" ry="2.9" fill="#fff" stroke="#333" stroke-width=".4"/><ellipse cx="767.8" cy="336.4" rx="2.2" ry="2.9" fill="#fff" stroke="#333" stroke-width=".4"/>
<circle cx="764.8" cy="339" r="1.7" fill="#dc2626"/><circle cx="764.2" cy="336.8" r=".6" fill="#111"/><circle cx="767.4" cy="337.2" r=".6" fill="#111"/>
<path d="M754,340.6 h5.6 M753.6,344 h6 M754.2,347.4 h5.6" stroke="#c06060" stroke-width=".45" fill="none"/>
<path d="M764.8,340.8 q-2.6,8.6 4.8,11 M764,343.6 q6,5.4 10.4,-.6 q-1.6,7 -7.4,8" stroke="#c83838" stroke-width=".55" fill="none"/>
<path d="M757.4,353.6 q6.6,2.8 13,.4" stroke="#d02828" stroke-width="1.2" fill="none"/><circle cx="763.8" cy="356.6" r="1.6" fill="#e8c828"/>
<circle cx="769.6" cy="355.2" r="2.7" fill="#ffffff"/>
<circle cx="742" cy="340.4" r="3.5" fill="#0a0a0a"/><circle cx="740.2" cy="339.5" r="2.8" fill="#ffffff"/>
<path d="M738.4,349.2 l2.2,-1 h3.2 l2.2,1 l-1,1.9 l-1.3,-.5 v4.4 h-3 v-4.4 l-1.3,.5z" fill="#0a0a0a"/>
<circle cx="727.4" cy="348.6" r=".6" fill="#e8a060"/><circle cx="733" cy="353" r=".6" fill="#e8a060"/>
</g>
<g id="wmlogo" opacity=".92">
<defs><linearGradient id="og" x1="0" x2="0" y1="0" y2="1"><stop offset="0" stop-color="#f07820"/><stop offset=".7" stop-color="#f59a30"/><stop offset="1" stop-color="#f8c060"/></linearGradient></defs>
<rect x="301.1" y="26.2" width="2.7" height="18.400000000000002" fill="url(#og)"/>
<rect x="305" y="21.4" width="2.5" height="23.200000000000003" fill="url(#og)"/>
<rect x="308.9" y="18.7" width="2.8" height="25.900000000000002" fill="url(#og)"/>
<rect x="312.4" y="23.4" width="1.4" height="21.200000000000003" fill="url(#og)"/>
<rect x="331.4" y="18.7" width="2.8" height="25.900000000000002" fill="url(#og)"/>
<rect x="335.7" y="21.4" width="2.5" height="23.200000000000003" fill="url(#og)"/>
<rect x="339.6" y="26.6" width="2.5" height="18.0" fill="url(#og)"/>
<path d="M313.8,31.4 C313.2,25 317,20.4 321.6,20.4 L322,24 C324,30 324.6,33.6 325.6,36 C327,33 328.2,31 329.8,28.4 L330.2,33.4 C328,36.4 326.6,39.4 325.6,43 L322.4,43 C322,36.4 320.6,30 318.6,25.6 C317.2,26.4 316.4,29 316.8,32.4 Z" fill="#f4901e"/>
<rect x="301" y="40" width="41" height="4.8" fill="#f8c050" opacity=".55"/>
</g>
</svg>
<div id="wm">智造资料网</div>
<div class="t" style="left:726.3px;top:335.2px;font-size:9.3px;font-weight:700;color:#0a0a0a;-webkit-text-stroke:.3px #0a0a0a;">A</div>
</body>
</html>
